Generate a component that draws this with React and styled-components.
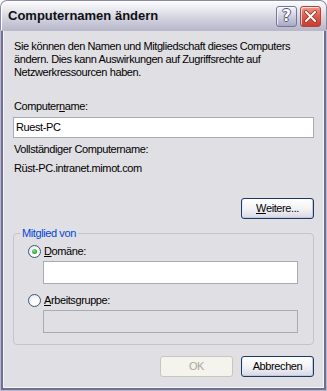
import React from 'react';
import styled, { createGlobalStyle } from 'styled-components';

const Global = createGlobalStyle`
  html, body { margin: 0; padding: 0; background: #ffffff; }
  body { font-family: "Liberation Sans", Arial, sans-serif; }
  #root { width: 327px; height: 391px; }
`;

const Window = styled.div`
  width: 327px;
  height: 391px;
  display: flex;
  flex-direction: column;
  box-sizing: border-box;
`;

const TitleBar = styled.div`
  height: 30px;
  flex: none;
  box-sizing: border-box;
  display: flex;
  align-items: flex-start;
  padding: 0 5px 0 7px;
  border-radius: 7px 7px 0 0;
  border: 1px solid #8b8aa6;
  border-bottom: none;
  background: linear-gradient(#fcfcfd 0%, #ececf2 25%, #d2d2df 60%, #b9b8cb 100%);
  box-shadow: inset 1px 1px 0 #ffffff;
`;

const Title = styled.div`
  flex: 1;
  padding-top: 7px;
  font-weight: bold;
  font-size: 13px;
  line-height: 15px;
  color: #0f0f14;
`;

const CaptionButtons = styled.div`
  display: flex;
  gap: 3px;
  padding-top: 5px;
`;

const CaptionButton = styled.div`
  width: 21px;
  height: 21px;
  box-sizing: border-box;
  border-radius: 3px;
  display: flex;
  align-items: center;
  justify-content: center;
  border: 1px solid ${p => (p.$close ? '#a7473d' : '#77769a')};
  background: ${p =>
    p.$close
      ? 'linear-gradient(#f09a8c, #de5f50 45%, #c83d2f)'
      : 'linear-gradient(#f4f4f9, #d2d2e2 45%, #a9a8c4)'};
  box-shadow: inset 1px 1px 0 rgba(255,255,255,0.7);
  color: #ffffff;
  font-weight: bold;
  font-size: 15px;
  line-height: 1;
  font-family: "DejaVu Sans", sans-serif;
  text-shadow: 1px 0 0 #55556e, -1px 0 0 #55556e, 0 1px 0 #55556e, 0 -1px 0 #55556e;
`;

const Body = styled.div`
  flex: 1;
  display: flex;
  flex-direction: column;
  background: #e0dfe3;
  border: 3px solid #706f90;
  border-top: none;
  box-shadow: inset 1px -1px 0 #f4f4f8, inset -1px 0 0 #f4f4f8;
  outline: 1px solid #b9b8cc;
  outline-offset: -1px;
  padding: 10px 10px 11px 11px;
  box-sizing: border-box;
  font-size: 11px;
  line-height: 13px;
  letter-spacing: -0.4px;
  color: #000000;
`;

const Paragraph = styled.p`
  margin: 0 0 21px 0;
`;

const Label = styled.div`
  margin: ${p => p.$mt || 0}px 0 0 0;
`;

const TextInput = styled.div`
  height: ${p => p.$h || 21}px;
  box-sizing: border-box;
  margin-top: ${p => p.$mt || 0}px;
  margin-left: -1px;
  border: 1px solid #a5acb5;
  background: ${p => (p.$disabled ? '#e0dfe3' : '#ffffff')};
  padding: 0 2px;
  display: flex;
  align-items: center;
`;

const ButtonRow = styled.div`
  display: flex;
  justify-content: flex-end;
  gap: 8px;
  margin-top: ${p => p.$mt || 0}px;
`;

const Button = styled.div`
  width: 73px;
  height: 21px;
  box-sizing: border-box;
  border-radius: 3px;
  display: flex;
  align-items: center;
  justify-content: center;
  border: 1px solid ${p => (p.$disabled ? '#c9c7ba' : '#1b3a6c')};
  background: ${p =>
    p.$disabled ? '#f4f3ee' : 'linear-gradient(#ffffff 0%, #f3f3f6 50%, #d9d8e4 100%)'};
  color: ${p => (p.$disabled ? '#aca899' : '#000000')};
  box-shadow: ${p =>
    p.$disabled ? 'none' : 'inset 0 -1px 0 #c8c7d8, inset 1px 0 0 #eaeaf2, inset -1px 0 0 #c8c7d8'};
`;

const Group = styled.fieldset`
  margin: 8px 0 0 -1px;
  padding: 5px 15px 11px 14px;
  border: 1px solid #c5c4c9;
  border-radius: 4px;
  display: flex;
  flex-direction: column;
`;

const Legend = styled.legend`
  color: #0046d5;
  padding: 0 2px;
  margin-left: -8px;
  font-size: 11px;
  line-height: 13px;
`;

const RadioRow = styled.div`
  display: flex;
  align-items: center;
  gap: 3px;
  height: 13px;
  margin-top: ${p => p.$mt || 0}px;
`;

const RadioCircle = styled.span`
  width: 13px;
  height: 13px;
  box-sizing: border-box;
  border-radius: 50%;
  border: 1px solid #3b5878;
  background: radial-gradient(circle at 60% 65%, #ffffff 30%, #dcdce6 100%);
  display: flex;
  align-items: center;
  justify-content: center;
  flex: none;
`;

const RadioDot = styled.span`
  width: 5px;
  height: 5px;
  border-radius: 50%;
  background: radial-gradient(circle at 40% 35%, #8fe08f, #25a425 70%, #1a8a1a);
`;

const Indented = styled.div`
  padding-left: 16px;
`;

const U = styled.span`
  text-decoration: underline;
`;

function CloseGlyph() {
  return (
    <svg width="13" height="13" viewBox="0 0 13 13">
      <path d="M2 2 L11 11 M11 2 L2 11" stroke="#8a2a20" strokeWidth="3.4" strokeLinecap="square" />
      <path d="M2 2 L11 11 M11 2 L2 11" stroke="#ffffff" strokeWidth="2" strokeLinecap="square" />
    </svg>
  );
}

export default function App() {
  return (
    <>
      <Global />
      <Window>
        <TitleBar>
          <Title>Computernamen ändern</Title>
          <CaptionButtons>
            <CaptionButton>?</CaptionButton>
            <CaptionButton $close>
              <CloseGlyph />
            </CaptionButton>
          </CaptionButtons>
        </TitleBar>
        <Body>
          <Paragraph>
            Sie können den Namen und Mitgliedschaft dieses Computers
            <br />
            ändern. Dies kann Auswirkungen auf Zugriffsrechte auf
            <br />
            Netzwerkressourcen haben.
          </Paragraph>
          <Label>
            Computer<U>n</U>ame:
          </Label>
          <TextInput $mt={4} $h={21}>Ruest-PC</TextInput>
          <Label $mt={5}>Vollständiger Computername:</Label>
          <Label $mt={6}>Rüst-PC.intranet.mimot.com</Label>
          <ButtonRow $mt={23}>
            <Button>
              <U>W</U>eitere...
            </Button>
          </ButtonRow>
          <Group>
            <Legend>Mitglied von</Legend>
            <RadioRow>
              <RadioCircle>
                <RadioDot />
              </RadioCircle>
              <span>
                <U>D</U>omäne:
              </span>
            </RadioRow>
            <Indented>
              <TextInput $mt={3} $h={23} />
            </Indented>
            <RadioRow $mt={10}>
              <RadioCircle />
              <span>
                <U>A</U>rbeitsgruppe:
              </span>
            </RadioRow>
            <Indented>
              <TextInput $mt={3} $h={23} $disabled />
            </Indented>
          </Group>
          <ButtonRow $mt={11}>
            <Button $disabled>OK</Button>
            <Button>Abbrechen</Button>
          </ButtonRow>
        </Body>
      </Window>
    </>
  );
}
